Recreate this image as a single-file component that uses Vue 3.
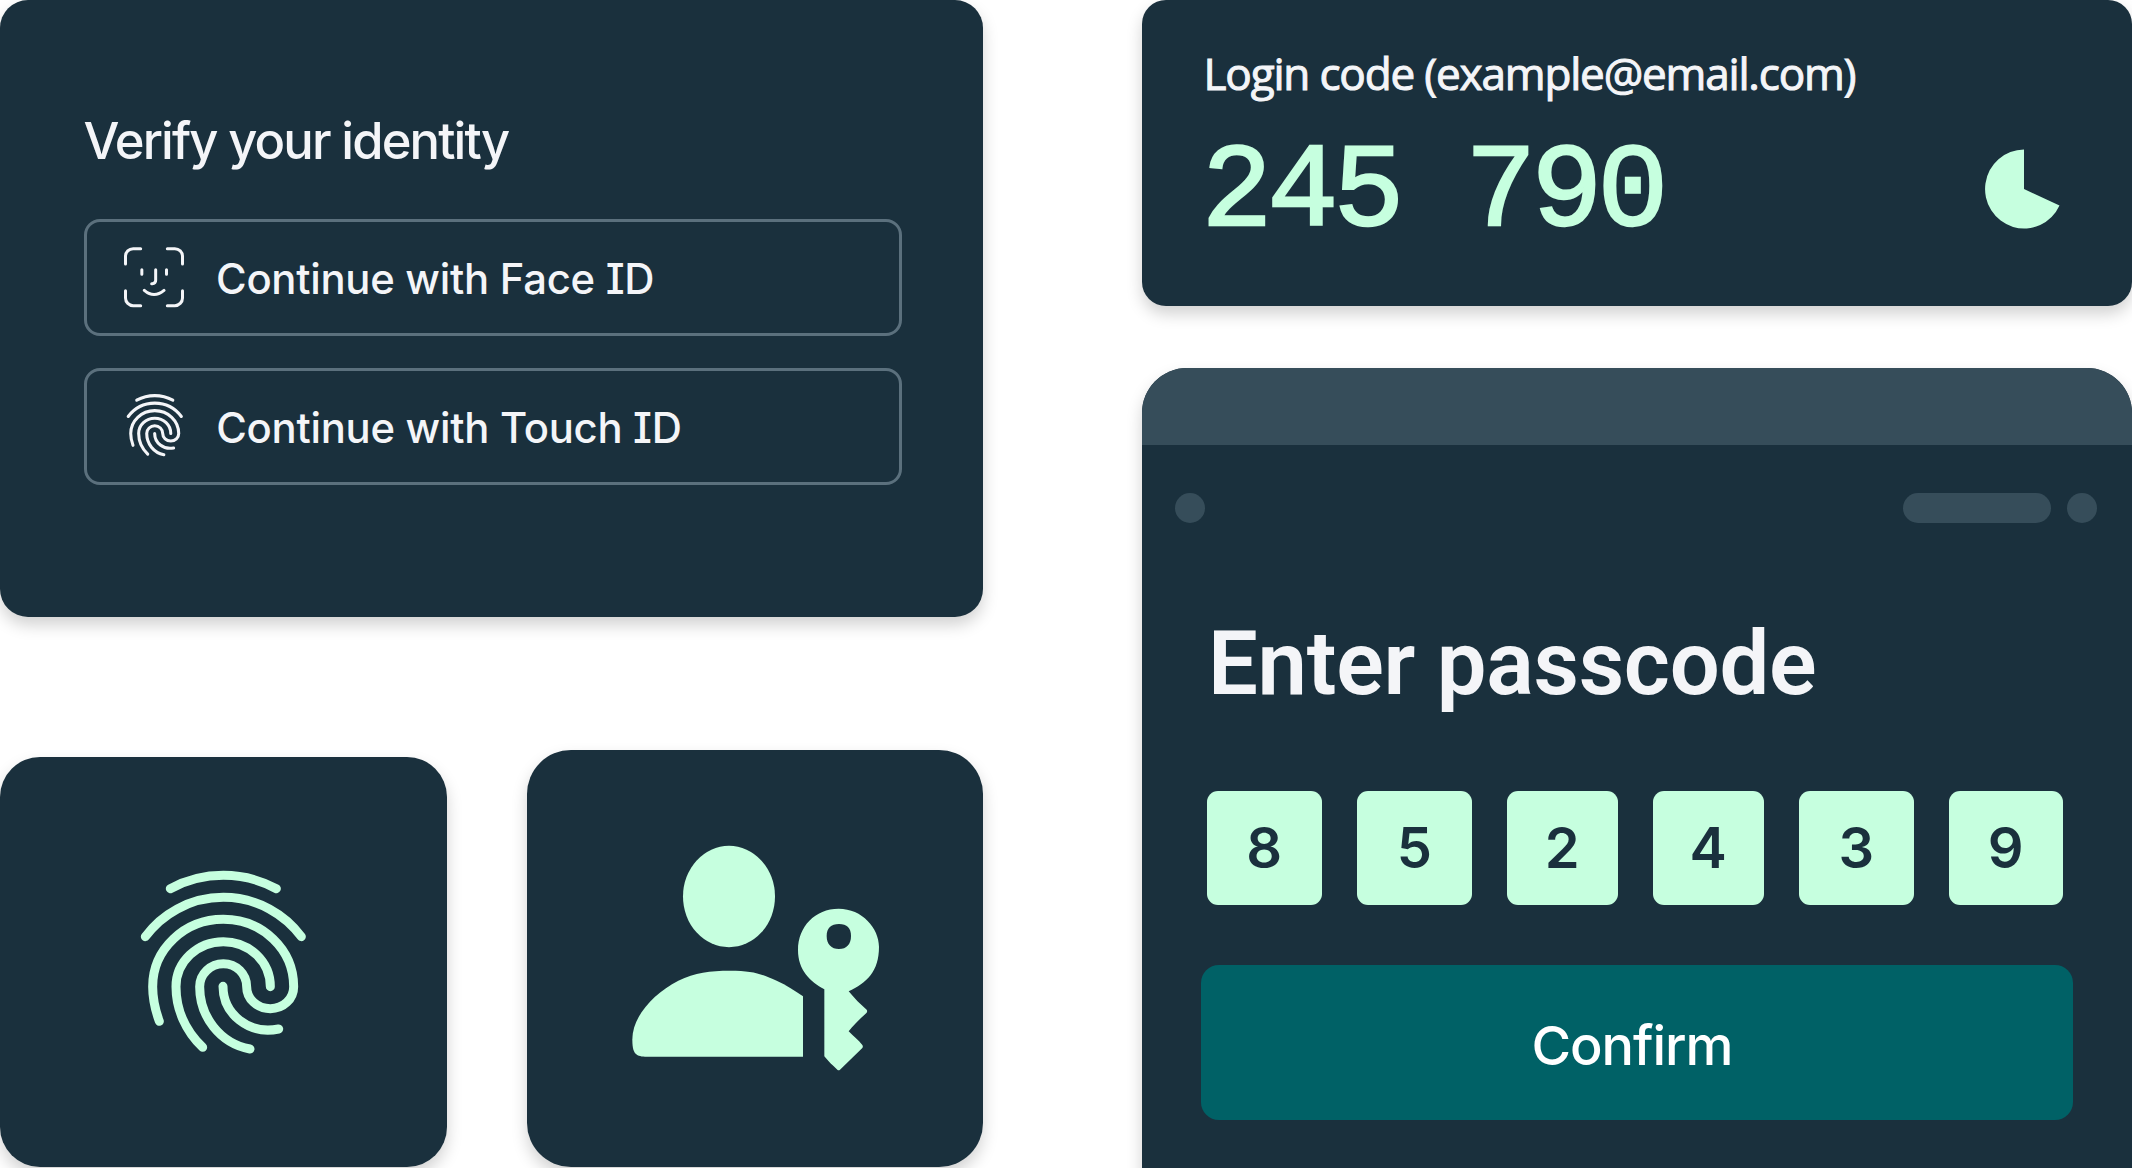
<script setup>
const digits = [
  { value: '8', width: 114.5, gap: 0 },
  { value: '5', width: 114.5, gap: 35.5 },
  { value: '2', width: 110.5, gap: 35.5 },
  { value: '4', width: 110.5, gap: 35.5 },
  { value: '3', width: 114.5, gap: 35.5 },
  { value: '9', width: 113.5, gap: 35.5 },
]

const fingerprint = [
  'M121 116 A336 336 0 0 1 439 116',
  'M46 260 A291 291 0 0 1 514 260',
  'M88 514 C75 478 68 446 68 410 C68 298 163 208 280 208 C397 208 491 298 491 410 C491 447 460 476 421 476 C382 476 350 447 350 410 C350 372 319 341 280 341 C241 341 209 372 209 410 C209 500 270 580 360 597',
  'M218 592 C167 543 138 478 138 410 C138 335 202 275 280 275 C358 275 421 335 421 410',
  'M279 409 C279 492 356 555 446 537',
]
</script>

<template>
  <main class="board">
    <div class="left">
      <section class="card verify">
        <h2 class="verify-title">Verify your identity</h2>
        <button class="option">
          <svg class="face" viewBox="0 0 180 182">
            <path d="M4.5 51V28a23 23 0 0 1 23-23H50M130 5h22.500a23 23 0 0 1 23 23v23M4.500 131v22a23 23 0 0 0 23 23H50M130 176h22.500a23 23 0 0 0 23-23v-22M53.500 68v14M127.500 68v14M95 68v32q0 10-10 10h-2M61 130q29 25 59 0" />
          </svg>
          <span class="option-label face-label">Continue with Face ID</span>
        </button>
        <button class="option">
          <svg class="finger-small" viewBox="0 0 570 660">
            <path v-for="d in fingerprint" :key="d" :d="d" />
          </svg>
          <span class="option-label touch-label">Continue with Touch ID</span>
        </button>
      </section>

      <div class="tiles">
        <section class="card tile-finger">
          <svg class="finger-large" viewBox="0 0 570 660">
            <path v-for="d in fingerprint" :key="d" :d="d" />
          </svg>
        </section>
        <section class="card tile-key">
          <svg class="user-key" viewBox="0 0 870 780">
            <ellipse cx="357" cy="199.500" rx="138" ry="152" />
            <path d="M67 628C67 560 130 490 205 452C255 427 300 422 360 422C430 422 455 432 500 452C530 466 555 482 579 499V680H105C75 680 67 668 67 628Z" />
            <path fill-rule="evenodd" d="M643 478C600 455 564 420 564 360C564 290 615 236 686 236C757 236 807 295 807 350C807 425 770 458 716 484C733 505 752 524 770 539Q773 543 770 548C750 566 732 584 716 604C730 618 745 630 757 645Q760 649 757 654L690 719Q686 723 682 719C667 706 655 694 643 679ZM650 318C650 343 664 357 687 357C710 357 723 343 723 318C723 294 711 282 687 282C663 282 650 294 650 318Z" />
          </svg>
        </section>
      </div>
    </div>

    <div class="right">
      <section class="card login">
        <div class="login-label">Login code (example@email.com)</div>
        <div class="login-row">
          <span class="code">245 790</span>
          <svg class="timer" viewBox="0 0 78 80">
            <path d="M39 40V0.500A39 39.500 0 1 0 74.500 56.500Z" />
          </svg>
        </div>
      </section>

      <section class="card passcode">
        <div class="bar"></div>
        <div class="controls">
          <i class="dot"></i>
          <i class="pill"></i>
          <i class="dot"></i>
        </div>
        <h1 class="passcode-title">Enter passcode</h1>
        <div class="digits">
          <span
            v-for="d in digits"
            :key="d.value"
            class="digit"
            :style="{ width: d.width + 'px', marginLeft: d.gap + 'px' }"
          >{{ d.value }}</span>
        </div>
        <button class="confirm">Confirm</button>
      </section>
    </div>
  </main>
</template>

<style>
body {
  background: #fff;
}
</style>

<style scoped>
.board {
  display: flex;
  justify-content: space-between;
  width: 2132px;
  height: 1168px;
  overflow: hidden;
  font-family: Inter, 'Liberation Sans', sans-serif;
  color: #f4f5f8;
}
h1,
h2 {
  margin: 0;
}
button {
  margin: 0;
  padding: 0;
  font: inherit;
  color: inherit;
}
svg {
  display: block;
  flex: none;
}
.card {
  box-sizing: border-box;
  background: #1a303d;
  box-shadow: 0 8px 16px rgba(0, 0, 0, 0.18);
}
.left {
  display: flex;
  flex-direction: column;
  justify-content: space-between;
  width: 983px;
  height: 1167px;
}
.verify {
  width: 982.5px;
  height: 617px;
  padding: 111px 81px 0 83.5px;
  border-radius: 28px;
}
.verify-title {
  height: 60px;
  margin-bottom: 47.5px;
  font-size: 50.7px;
  line-height: 60px;
  font-weight: 500;
  letter-spacing: -1.87px;
  white-space: nowrap;
}
.option {
  box-sizing: border-box;
  display: flex;
  align-items: center;
  width: 818px;
  height: 117.5px;
  margin-bottom: 31.5px;
  padding-left: 37.5px;
  border: 3px solid #5b707d;
  border-radius: 16px;
  background: none;
}
.option-label {
  padding-top: 3px;
  font-size: 41.8px;
  line-height: 50px;
  font-weight: 500;
  letter-spacing: -0.27px;
  font-feature-settings: 'cv08';
  white-space: nowrap;
}
.face-label {
  margin-left: 32px;
}
.touch-label {
  margin-left: 28.5px;
}
.face {
  width: 60px;
  height: 60.7px;
  fill: none;
  stroke: #f4f5f8;
  stroke-width: 9;
  stroke-linecap: round;
}
.finger-small,
.finger-large {
  fill: none;
  stroke: #f4f5f8;
  stroke-width: 27;
  stroke-linecap: round;
}
.finger-small {
  width: 64.7px;
  height: 74.9px;
  margin: -3px 0 0 -1px;
}
.tiles {
  display: flex;
  align-items: flex-end;
  justify-content: space-between;
}
.tile-finger {
  display: flex;
  width: 446.5px;
  height: 410px;
  padding: 93px 0 0 130px;
  border-radius: 40px;
}
.finger-large {
  width: 190px;
  height: 220px;
  stroke: #c6ffdf;
}
.tile-key {
  width: 456px;
  height: 417.500px;
  padding: 80.500px 0 0 83px;
  border-radius: 44px;
}
.user-key {
  width: 290px;
  height: 260px;
  fill: #c6ffdf;
}
.right {
  width: 990px;
}
.login {
  height: 306px;
  padding: 47px 69px 0 61.5px;
  border-radius: 24px;
}
.login-label {
  height: 52px;
  font-family: 'Open Sans', 'Liberation Sans', sans-serif;
  font-size: 44.1px;
  line-height: 52px;
  letter-spacing: -1.2px;
  white-space: nowrap;
  -webkit-text-stroke: 1px #f4f5f8;
}
.login-row {
  display: flex;
  align-items: center;
  justify-content: space-between;
  height: 120px;
  margin-top: 30px;
}
.code {
  margin-left: -2px;
  padding-top: 10px;
  font-family: 'Liberation Mono', monospace;
  font-size: 118px;
  line-height: 120px;
  letter-spacing: -4.8px;
  white-space: pre;
  color: #c6ffdf;
  -webkit-text-stroke: 2.4px #c6ffdf;
}
.timer {
  width: 78px;
  height: 80px;
  fill: #c6ffdf;
}
.passcode {
  height: 840px;
  margin-top: 62px;
  border-radius: 45px 45px 0 0;
  overflow: hidden;
}
.bar {
  height: 77px;
  background: #364d5a;
}
.controls {
  display: flex;
  height: 30px;
  margin-top: 48px;
  padding: 0 35px 0 33px;
}
.dot,
.pill {
  width: 30px;
  border-radius: 15px;
  background: #364d5a;
}
.pill {
  width: 148px;
  margin: 0 16px 0 auto;
}
.passcode-title {
  height: 104px;
  margin: 89px 0 0 66px;
  font-family: Roboto, 'Liberation Sans', sans-serif;
  font-size: 88.5px;
  line-height: 104px;
  font-weight: 600;
  letter-spacing: -0.3px;
  white-space: nowrap;
}
.digits {
  display: flex;
  margin: 74.500px 0 0 65px;
}
.digit {
  height: 114px;
  border-radius: 11px;
  background: #c6ffdf;
  color: #1a303d;
  font-size: 56px;
  line-height: 115px;
  font-weight: 600;
  text-align: center;
}
.confirm {
  display: block;
  box-sizing: border-box;
  width: 872px;
  height: 155px;
  margin: 60.500px 0 0 59px;
  padding: 0 10px 0 0;
  border: 0;
  border-radius: 18px;
  background: #006166;
  color: #fff;
  font-size: 54px;
  line-height: 162px;
  font-weight: 500;
  letter-spacing: -1.1px;
  text-align: center;
}
</style>
